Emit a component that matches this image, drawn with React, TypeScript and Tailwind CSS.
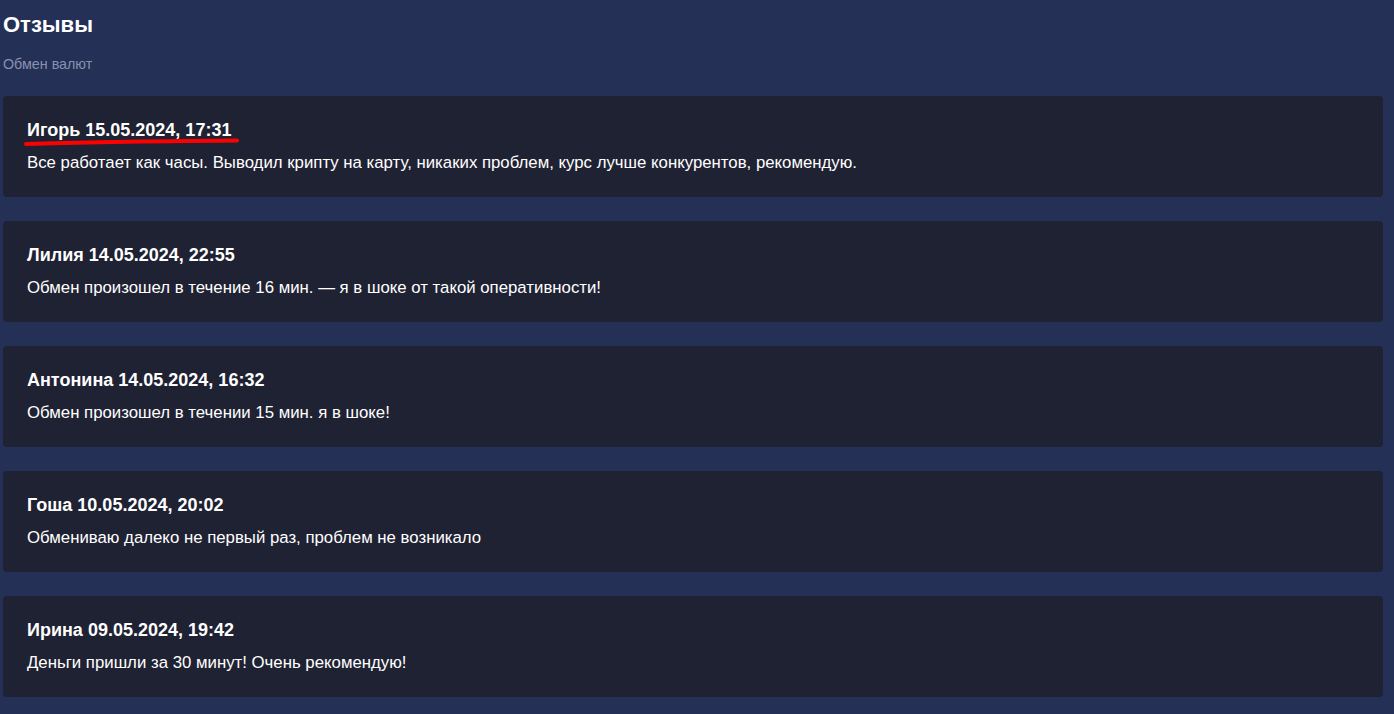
const reviews = [
  {
    name: "Игорь",
    date: "15.05.2024, 17:31",
    text: "Все работает как часы. Выводил крипту на карту, никаких проблем, курс лучше конкурентов, рекомендую.",
    marked: true,
  },
  {
    name: "Лилия",
    date: "14.05.2024, 22:55",
    text: "Обмен произошел в течение 16 мин. — я в шоке от такой оперативности!",
  },
  {
    name: "Антонина",
    date: "14.05.2024, 16:32",
    text: "Обмен произошел в течении 15 мин. я в шоке!",
  },
  {
    name: "Гоша",
    date: "10.05.2024, 20:02",
    text: "Обмениваю далеко не первый раз, проблем не возникало",
  },
  {
    name: "Ирина",
    date: "09.05.2024, 19:42",
    text: "Деньги пришли за 30 минут! Очень рекомендую!",
  },
]

export default function App() {
  return (
    <div
      className="min-h-screen bg-[#243056] pl-[3px] pr-[11px] pt-[12px] pb-6 text-white"
      style={{ fontFamily: '"Liberation Sans", Arial, sans-serif' }}
    >
      <h1 className="text-[22px] leading-[26px] font-bold">Отзывы</h1>
      <p className="mt-[17px] text-[14.3px] leading-[18px] text-[#8892b0]">Обмен валют</p>

      <div className="mt-[23px] flex flex-col gap-6">
        {reviews.map((r) => (
          <div key={r.name} className="rounded bg-[#1f2233] px-6 pt-[23px] pb-[24px]">
            <div className="relative inline-block text-[18px] leading-[22px] font-bold">
              {r.name} {r.date}
              {r.marked && (
                <svg
                  className="absolute left-[-3px] top-[18px]"
                  width="218"
                  height="10"
                  viewBox="0 0 218 10"
                >
                  <path
                    d="M2 7 C 60 5, 150 4, 213 3.5"
                    stroke="#ff0000"
                    strokeWidth="4"
                    strokeLinecap="round"
                    fill="none"
                  />
                </svg>
              )}
            </div>
            <p className="mt-[10px] text-[16.8px] leading-[20px]">{r.text}</p>
          </div>
        ))}
      </div>
    </div>
  )
}
